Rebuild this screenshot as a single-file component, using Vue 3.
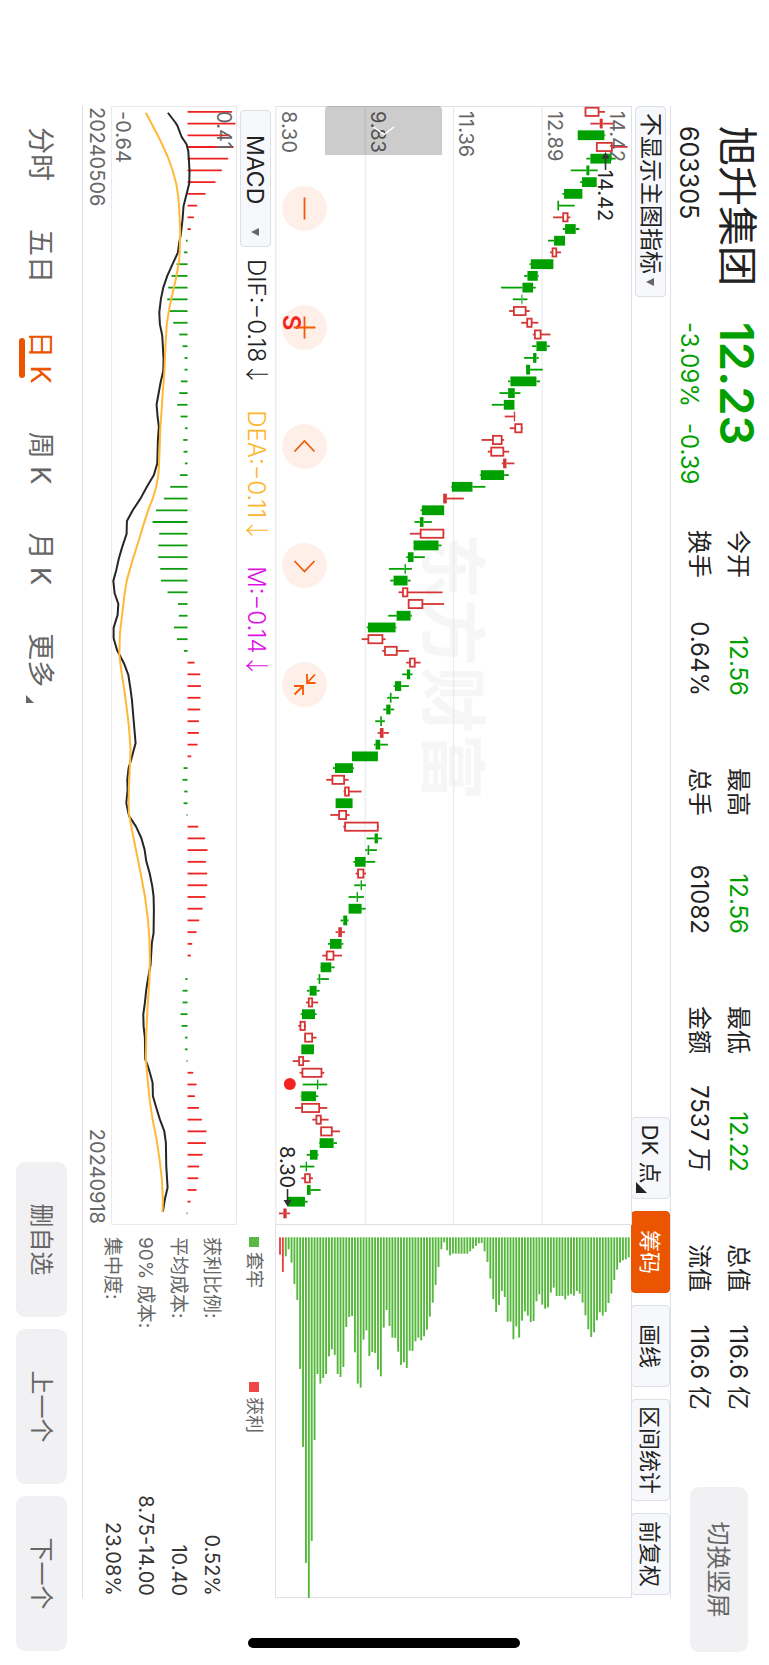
<script setup>
const stats = [
  [
    { label: '今开', value: '12.56', down: true },
    { label: '换手', value: '0.64%' },
  ],
  [
    { label: '最高', value: '12.56', down: true },
    { label: '总手', value: '61082' },
  ],
  [
    { label: '最低', value: '12.22', down: true },
    { label: '金额', value: '7537 万' },
  ],
  [
    { label: '总值', value: '116.6 亿' },
    { label: '流值', value: '116.6 亿' },
  ],
]

const tools = [
  { label: 'DK 点', corner: true },
  { label: '筹码', active: true },
  { label: '画线' },
  { label: '区间统计' },
  { label: '前复权' },
]

const tabs = [
  { label: '分时' },
  { label: '五日' },
  { label: '日 K', active: true },
  { label: '周 K' },
  { label: '月 K' },
  { label: '更多', corner: true },
]

const costs = [
  { label: '获利比例:', value: '0.52%' },
  { label: '平均成本:', value: '10.40' },
  { label: '90% 成本:', value: '8.75-14.00' },
  { label: '集中度:', value: '23.08%' },
]

const zooms = [
  { name: '缩小', d: 'M11.5 22.5H33.5' },
  { name: '放大', d: 'M11.5 22.5H33.5M22.5 11.5V33.5' },
  { name: '左移', d: 'M27.5 12.5L17 22.5L27.5 32.5' },
  { name: '右移', d: 'M18 12.5L28.5 22.5L18 32.5' },
  { name: '收起', d: 'M12 20H21V11.5M21 20L12.5 12M24 33V24H33M24 24L32.5 32.5' },
]

const step = 11.73
const xAt = (i) => 5.8 + i * step

// low, body bottom, body top, high (thirds of a unit above the origin), direction
const candleRows = `1005 1005 1049 1066 r|1022 1050 1059 1090 f|984 984 1064 1067 g|1039 1039 1089 1134 r|1010 1022 1084 1098 g|
963 1010 1019 1044 g|991 997 1041 1041 g|938 943 998 998 g|923 923 928 975 g|910 938 956 962 r|939 946 978 989 g|
895 913 946 946 g|901 906 922 934 r|839 843 911 911 g|823 833 864 867 g|754 818 850 858 g|789 815 818 833 g|
778 790 830 840 r|814 830 848 866 r|849 853 875 902 r|847 860 891 900 g|823 850 860 867 g|829 829 841 879 g|
775 782 860 871 g|749 775 795 812 g|726 762 794 794 g|765 792 796 797 f|780 794 818 818 r|695 727 758 763 r|
714 722 763 778 r|756 760 770 794 f|690 693 763 777 g|604 606 668 707 g|580 580 591 642 f|512 516 583 583 g|
494 510 521 546 g|480 510 583 583 r|491 491 566 575 g|469 474 491 525 g|417 464 468 486 g|421 431 473 482 g|
446 457 475 578 r|474 474 520 583 r|415 440 482 486 g|350 354 437 440 g|335 353 400 407 r|397 403 443 477 r|
469 478 497 512 r|457 471 481 488 g|431 435 454 477 g|412 420 425 447 g|400 409 422 433 g|376 391 396 405 g|
383 390 401 417 f|372 377 391 414 g|306 306 384 384 g|249 255 309 312 g|229 245 285 296 r|281 283 299 335 r|
257 257 308 308 g|241 265 291 299 r|280 283 386 387 r|350 374 384 396 g|346 353 358 381 g|310 315 347 376 g|
317 322 343 348 r|313 332 336 348 g|296 320 324 342 g|296 296 335 347 g|272 280 292 296 g|257 265 276 285 f|
234 240 275 280 g|217 228 253 276 r|211 212 244 254 g|202 206 211 237 g|171 179 200 209 g|168 174 189 205 r|
152 156 195 200 g|145 149 167 168 r|163 163 189 200 r|154 154 192 192 g|128 145 162 179 r|149 155 217 223 r|
158 201 205 232 g|152 154 198 205 g|135 154 210 232 r|187 197 215 236 r|211 211 248 270 r|207 209 251 261 g|
170 180 203 206 g|150 167 171 193 g|154 163 182 189 r|171 171 182 212 g|113 113 165 173 g|87 100 110 120 f`

const yMain = (u) => (1147 - u) / 3
const candles = candleRows
  .replace(/\n/g, '')
  .split('|')
  .map((row, i) => {
    const [low, bottom, top, high, kind] = row.split(' ')
    const hollow = kind === 'r'
    const inset = hollow ? 0.8 : 0
    return {
      kind: kind === 'g' ? 'fall' : hollow ? 'rise' : 'rise solid',
      x: xAt(i),
      low: yMain(low),
      high: yMain(high),
      top: yMain(top) + inset,
      bottom: yMain(bottom) - inset,
      half: 4.9 - inset,
    }
  })

const prices = [
  { text: '14.42', y: 22 },
  { text: '12.89', y: 84, line: 90 },
  { text: '11.36', y: 173, line: 178.5 },
  { text: '9.83', y: 261, line: 267 },
  { text: '8.30', y: 350 },
]

const chips = `163 215 168 147 187 251 299 506 740 1088 1193 1022 719 521 550 533 521 468 447 464 521 530 500 380 350 347 456 550 562 418
390 467 455 458 508 528 382 329 377 412 413 454 494 486 503 451 452 423 412 420 408 388 349 307 254 200 147 126 150 165
160 160 160 160 160 160 153 145 137 129 128 153 185 235 296 335 314 272 290 364 364 417 378 412 361 333 346 365 362 303
282 313 325 321 277 262 287 287 287 297 286 281 286 272 280 307 345 387 410 396 360 336 346 335 308 280 239 208 187 180 177 171`
  .split(/\s+/)
  .map((v, i) => ({
    length: (v - 111) / 3,
    y: yMain(91 + i * 8.645) - 0.95,
    profit: i < 2,
  }))

const yMacd = (u) => (710 - u) / 3 + 0.5
const zero = yMacd(563)
const bars = `696 707 690 701 685 666 647 617 592 582 573 558 552 530 515 505 502 509 520 538 548 554 554 543 538 532 542 555 550 551
555 540 511 492 468 458 478 475 475 481 483 503 534 537 522 531 552 584 601 603 602 601 597 597 593 574 551 548 553 551
560 595 616 623 618 622 622 617 608 598 590 577 573 563 556 548 548 542 545 555 555 560 580 590 585 597 606 620 618 608
598 595 590 572 560`
  .split(/\s+/)
  .map((v, i) => ({ x: xAt(i), y: yMacd(v), up: v > 563 }))

const toPath = (pts) =>
  pts
    .trim()
    .split(/\s+/)
    .map((p) => {
      const [x, u] = p.split(',')
      return `${(x / 3).toFixed(1)},${yMacd(u).toFixed(1)}`
    })
    .join(' ')

const dif = toPath(`20,504 50,527 60,533 92,545 115,560 135,565 160,567 195,569 232,568 265,560 300,551 340,548 385,543 410,538
440,534 475,518 510,502 545,490 580,483 620,478 655,480 690,487 760,491 795,490 830,482 896,470 933,473 963,477
1003,474 1073,472 1108,462 1143,441 1178,422 1213,399 1246,381 1285,380 1323,367 1358,357 1393,349 1426,340 1463,344
1495,355 1528,353 1567,341 1598,341 1633,351 1673,372 1708,385 1753,392 1783,396 1843,401 1913,407 1958,395 1988,386
2023,382 2053,383 2093,379 2123,385 2133,388 2163,408 2198,424 2233,434 2268,439 2303,449 2343,457 2373,461 2413,462
2483,461 2513,456 2578,452 2623,444 2653,439 2693,435 2728,430 2763,431 2798,435 2863,436 2878,442 2903,450 2933,458
2973,459 3008,469 3043,480 3078,493 3113,498 3183,499 3248,503 3283,495 3321,489`)

const dea = toPath(`20,438 53,455 103,481 153,504 193,518 233,529 273,535 313,538 383,541 423,540 463,538 513,529 553,520 603,509
653,501 713,497 803,493 853,489 903,486 968,481 1033,479 1083,477 1108,475 1143,469 1183,457 1213,445 1253,432 1303,417
1363,398 1423,381 1463,374 1523,367 1583,360 1648,358 1703,365 1753,373 1813,381 1863,387 1933,392 1983,390 2043,387
2093,386 2123,387 2173,396 2233,408 2303,422 2373,435 2433,443 2493,448 2563,450 2633,448 2703,443 2783,439 2863,438
2923,443 2983,449 3043,458 3103,470 3163,479 3223,486 3283,489 3321,488`)
</script>

<template>
  <div class="device">
    <main class="screen">
      <header class="quote">
        <div class="identity">
          <h1>旭升集团</h1>
          <span class="code">603305</span>
        </div>
        <div class="price">
          <strong>12.23</strong>
          <span class="change"><span>-3.09%</span><span>-0.39</span></span>
        </div>
        <dl class="stats">
          <div v-for="(group, g) in stats" :key="g" class="stat-group">
            <div v-for="s in group" :key="s.label" class="stat">
              <dt>{{ s.label }}</dt>
              <dd :class="{ down: s.down }">{{ s.value }}</dd>
            </div>
          </div>
        </dl>
        <button type="button" class="soft rotate">切换竖屏</button>
      </header>

      <section class="board">
        <div class="toolbar">
          <label class="picker main-picker">
            <select aria-label="主图指标"><option>不显示主图指标</option></select>
          </label>
          <div class="tools">
            <button v-for="t in tools" :key="t.label" type="button" class="tool" :class="{ active: t.active, corner: t.corner }">
              {{ t.label }}
            </button>
          </div>
        </div>

        <div class="row">
          <div class="pane">
            <svg class="chart" viewBox="0 0 1120 357" role="img" aria-label="日K线">
              <text class="watermark" x="427" y="204">东方财富</text>
              <rect class="frame" x="0.5" y="0.5" width="1119" height="356" />
              <g v-for="p in prices" :key="p.text">
                <line v-if="p.line" class="grid" x1="0" x2="1119" :y1="p.line" :y2="p.line" />
                <text class="axis" x="5" :y="p.y">{{ p.text }}</text>
              </g>
              <g v-for="(c, i) in candles" :key="i" :class="c.kind">
                <line :x1="c.x" :x2="c.x" :y1="c.high" :y2="c.top" />
                <line :x1="c.x" :x2="c.x" :y1="c.bottom" :y2="c.low" />
                <rect :x="c.x - c.half" :y="c.top" :width="c.half * 2" :height="c.bottom - c.top" />
              </g>
              <path class="pointer" d="M52 26.5H64" />
              <path class="head" d="M46 26.5L52.5 22.5V30.5Z" />
              <text class="mark" x="64" y="34">14.42</text>
              <text class="mark" x="1041" y="352">8.30</text>
              <path class="pointer" d="M1084 344.8H1096" />
              <path class="head" d="M1101.5 344.8L1095 340.8V348.8Z" />
              <text class="sell" x="209" y="349">S</text>
              <circle class="dot" cx="978.8" cy="342.5" r="6" />
            </svg>
            <button type="button" class="handle" aria-label="展开">
              <svg viewBox="0 0 49 117"><path d="M21 68.500L28.500 58L21 48" /></svg>
            </button>
            <div class="zooms">
              <button v-for="z in zooms" :key="z.name" type="button" :aria-label="z.name">
                <svg viewBox="0 0 45 45"><path :d="z.d" /></svg>
              </button>
            </div>
          </div>
          <svg class="chart" viewBox="0 0 373 357" role="img" aria-label="筹码分布">
            <path class="frame" d="M0 0.5H372.5V356.5H0" />
            <rect
              v-for="(c, i) in chips"
              :key="i"
              :class="c.profit ? 'profit' : 'trapped'"
              x="12.3"
              :y="c.y"
              :width="c.length"
              height="1.9"
            />
          </svg>
        </div>

        <div class="row">
          <div class="macd">
            <div class="macd-head">
              <label class="picker macd-picker">
                <select aria-label="副图指标"><option>MACD</option></select>
              </label>
              <span>DIF:−0.18<i>↓</i></span>
              <span class="dea">DEA:−0.11<i>↓</i></span>
              <span class="m">M:−0.14<i>↓</i></span>
            </div>
            <svg class="chart" viewBox="0 0 1120 126" role="img" aria-label="MACD">
              <rect class="frame light" x="0.5" y="0.5" width="1119" height="125" />
              <line
                v-for="(b, i) in bars"
                :key="i"
                :class="b.up ? 'bar-up' : 'bar-down'"
                :x1="b.x"
                :x2="b.x"
                :y1="zero"
                :y2="b.y"
              />
              <polyline class="dif-line" :points="dif" />
              <polyline class="dea-line" :points="dea" />
              <text class="axis" x="5" y="20">0.41</text>
              <text class="axis" x="5" y="121">-0.64</text>
            </svg>
            <div class="dates"><span>20240506</span><span>20240918</span></div>
          </div>
          <div class="chip-info">
            <div class="legend">
              <span class="trapped-key">套牢</span>
              <span class="profit-key">获利</span>
            </div>
            <dl>
              <div v-for="c in costs" :key="c.label">
                <dt>{{ c.label }}</dt>
                <dd>{{ c.value }}</dd>
              </div>
            </dl>
          </div>
        </div>
      </section>

      <footer class="bottom">
        <nav class="tabs">
          <button v-for="t in tabs" :key="t.label" type="button" :class="{ active: t.active, corner: t.corner }">
            {{ t.label }}
          </button>
        </nav>
        <div class="actions">
          <button type="button" class="soft">删自选</button>
          <button type="button" class="soft">上一个</button>
          <button type="button" class="soft">下一个</button>
        </div>
      </footer>
      <div class="home-bar"></div>
    </main>
  </div>
</template>

<style>
body {
  margin: 0;
  background: #fff;
}
</style>

<style scoped>
* {
  box-sizing: border-box;
}
.device {
  width: 100vw;
  height: 100vh;
  overflow: hidden;
}
/* Landscape screen shown on a portrait-held device */
.screen {
  position: relative;
  display: flex;
  flex-direction: column;
  width: 100vh;
  height: 100vw;
  transform-origin: 0 0;
  transform: translateX(100vw) rotate(90deg);
  background: #fff;
  color: #222;
  font-family: Inter, "Noto Sans CJK SC", sans-serif;
  white-space: nowrap;
}
button,
select {
  font: inherit;
  color: inherit;
  border: 0;
  padding: 0;
  margin: 0;
  background: none;
}
dl,
dd,
h1 {
  margin: 0;
}
.quote {
  display: flex;
  align-items: flex-start;
  height: 98px;
  padding: 10px 13px 0 126px;
}
.identity {
  width: 196px;
}
h1 {
  font-size: 40px;
  font-weight: 400;
  line-height: 44px;
}
.code {
  display: block;
  margin-top: 10px;
  font-size: 25px;
  line-height: 32px;
}
.price {
  width: 208px;
  color: #00a000;
}
.price strong {
  display: block;
  font-size: 47px;
  font-weight: 600;
  line-height: 44px;
}
.change {
  display: flex;
  gap: 16px;
  margin-top: 10px;
  font-size: 24px;
  line-height: 32px;
}
.stats {
  display: flex;
  gap: 72px;
  padding-top: 1px;
  font-size: 24px;
}
.stat-group {
  width: 166px;
}
.stat {
  display: flex;
  justify-content: space-between;
  line-height: 39px;
}
.down {
  color: #00a000;
}
.soft {
  padding-bottom: 3px;
  border-radius: 9px;
  background: #f1f1f3;
  color: #666;
  font-size: 24px;
}
.rotate {
  width: 165px;
  height: 58px;
  margin: 11px 0 0 auto;
}
.board {
  margin: 0 67px 0 106px;
  border-top: 1px solid #dfe1e6;
  border-bottom: 1px solid #dfe1e6;
}
.toolbar {
  display: flex;
  justify-content: space-between;
  align-items: center;
  height: 38px;
  padding-right: 3px;
}
.picker {
  position: relative;
  display: flex;
  height: 31px;
  border: 1px solid #dcdfe6;
  border-radius: 4px;
  background: #f7f8fb;
}
.picker select {
  width: 100%;
  appearance: none;
  outline: 0;
}
.picker::after {
  content: "";
  position: absolute;
  top: 11px;
  right: 10px;
  border: 4px solid transparent;
  border-top: 8px solid #666;
  border-bottom: 0;
}
.main-picker {
  width: 191px;
}
.main-picker select {
  padding-left: 6px;
  font-size: 23px;
  line-height: 28px;
}
.tools {
  display: flex;
  gap: 12px;
  height: 39px;
}
.tool {
  position: relative;
  min-width: 82px;
  padding: 0 6px 3px;
  border: 1px solid #dcdfe6;
  border-radius: 4px;
  background: #f7f8fb;
  font-size: 22px;
}
.tool.active {
  border-color: #eb5500;
  background: #eb5500;
  color: #fff;
}
.tool.corner {
  padding-right: 14px;
}
.tool.corner::after {
  content: "";
  position: absolute;
  right: 5px;
  bottom: 4px;
  border-left: 11px solid transparent;
  border-bottom: 11px solid #222;
}
.row {
  display: grid;
  grid-template-columns: 3fr 1fr;
}
.chart {
  display: block;
  width: 100%;
}
.pane {
  position: relative;
}
.frame {
  fill: none;
  stroke: #dfe1e8;
}
.frame.light {
  stroke: #e8e8ea;
}
.grid {
  stroke: #e3e6ec;
}
.axis {
  fill: #666;
  font-size: 20px;
}
.mark {
  fill: #222;
  font-size: 20px;
}
.watermark {
  fill: #f6f6f6;
  font-size: 67px;
  font-weight: 700;
}
.rise {
  stroke: #d63535;
  stroke-width: 1.8;
  fill: none;
}
.rise.solid {
  fill: #d63535;
}
.fall {
  fill: #00a000;
  stroke: #00a000;
  stroke-width: 1.8;
}
.fall rect,
.solid rect {
  stroke: none;
}
.pointer {
  stroke: #333;
  stroke-width: 1.6;
}
.head {
  fill: #333;
}
.sell {
  fill: #f52222;
  font-size: 24px;
  font-weight: 600;
}
.dot {
  fill: #f52222;
}
.trapped {
  fill: #55b83c;
}
.profit {
  fill: #ee4444;
}
.handle {
  position: absolute;
  left: 0;
  top: 190px;
  width: 49px;
  height: 117px;
  border-radius: 4px 0 0 4px;
  background: rgba(0, 0, 0, 0.2);
}
.handle svg {
  display: block;
}
.handle path {
  fill: none;
  stroke: #fff;
  stroke-width: 1.5;
}
.zooms {
  position: absolute;
  left: 80px;
  top: 305px;
  display: flex;
  gap: 74px;
}
.zooms button {
  width: 45px;
  height: 45px;
  border-radius: 50%;
  background: rgba(245, 90, 10, 0.09);
}
.zooms svg {
  display: block;
}
.zooms path {
  fill: none;
  stroke: #f25a05;
  stroke-width: 1.8;
}
.macd-head {
  display: flex;
  align-items: center;
  height: 38px;
  padding-left: 4px;
  font-size: 24px;
  font-weight: 300;
  line-height: 30px;
}
.macd-head span {
  margin-right: 24px;
}
.macd-head i {
  font-family: "Noto Sans CJK SC", sans-serif;
  font-style: normal;
  line-height: 24px;
}
.macd-picker {
  width: 137px;
  margin-right: 12px;
}
.macd-picker select {
  padding-left: 24px;
  font-size: 23px;
  font-weight: 400;
}
.dea {
  color: #ffb52e;
}
.m {
  color: #e010e6;
}
.bar-up {
  stroke: #f02020;
  stroke-width: 1.8;
}
.bar-down {
  stroke: #109c10;
  stroke-width: 1.8;
}
.dif-line,
.dea-line {
  fill: none;
  stroke: #262626;
  stroke-width: 2;
  stroke-linejoin: round;
}
.dea-line {
  stroke: #ffb935;
}
.dates {
  display: flex;
  justify-content: space-between;
  height: 28px;
  padding: 0 1px;
  color: #666;
  font-size: 20px;
  line-height: 28px;
}
.chip-info {
  padding: 6px 2px 0 12px;
  color: #666;
}
.legend {
  display: flex;
  font-size: 18px;
  line-height: 30px;
}
.legend span {
  display: flex;
  align-items: center;
  gap: 5px;
  width: 145px;
}
.legend span::before {
  content: "";
  width: 10px;
  height: 10px;
  background: #5ab946;
}
.legend .profit-key::before {
  background: #ee4848;
}
.chip-info dl {
  padding-top: 11px;
  margin-bottom: -4px;
}
.chip-info dl div {
  display: flex;
  justify-content: space-between;
  font-size: 19px;
  line-height: 33px;
}
.chip-info dd {
  color: #333;
  font-size: 20px;
}
.bottom {
  display: flex;
  justify-content: space-between;
  flex: 1;
  padding: 15px 14px 0 127px;
}
.tabs {
  display: flex;
  gap: 48px;
  height: 50px;
  color: #666;
  font-size: 27px;
}
.tabs button {
  position: relative;
}
.tabs .active {
  color: #eb5500;
}
.tabs .active::after {
  content: "";
  position: absolute;
  left: 7px;
  right: 6px;
  bottom: 2px;
  height: 6px;
  border-radius: 3px;
  background: #eb5500;
}
.tabs .corner::after {
  content: "";
  position: absolute;
  right: -16px;
  bottom: 9px;
  border-left: 8px solid transparent;
  border-bottom: 8px solid #666;
}
.actions {
  display: flex;
  gap: 12px;
}
.actions .soft {
  width: 155px;
  height: 51px;
}
.home-bar {
  position: absolute;
  right: 17px;
  top: 249px;
  width: 10px;
  height: 272px;
  border-radius: 5px;
  background: #000;
}
</style>
